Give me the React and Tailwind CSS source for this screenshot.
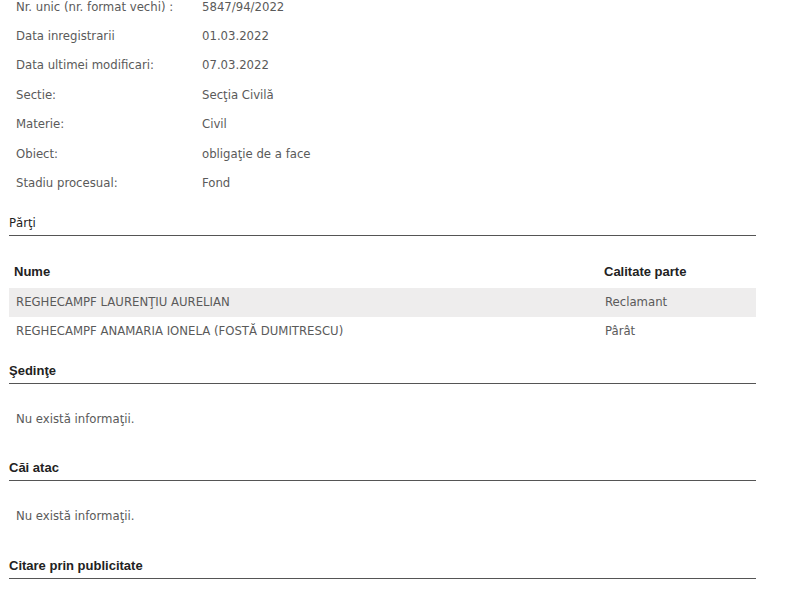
import React from 'react';

const details = [
  ['Nr. unic (nr. format vechi) :', '5847/94/2022'],
  ['Data inregistrarii', '01.03.2022'],
  ['Data ultimei modificari:', '07.03.2022'],
  ['Sectie:', 'Secţia Civilă'],
  ['Materie:', 'Civil'],
  ['Obiect:', 'obligaţie de a face'],
  ['Stadiu procesual:', 'Fond'],
];

const parti = [
  ['REGHECAMPF LAURENŢIU AURELIAN', 'Reclamant'],
  ['REGHECAMPF ANAMARIA IONELA (FOSTĂ DUMITRESCU)', 'Pârât'],
];

const body = "font-['DejaVu_Sans_Condensed','DejaVu_Sans',sans-serif] text-[13px] leading-[18px] text-[#5a5a5a]";
const bold = "font-['Liberation_Sans',Arial,sans-serif] font-bold text-[13px] text-[#222]";

function SectionTitle({ children, className = bold }) {
  return (
    <div className="border-b border-[#555] pb-[3px]">
      <h3 className={`${className} leading-[18px]`}>{children}</h3>
    </div>
  );
}

export default function App() {
  return (
    <div className="w-[800px] h-[600px] overflow-hidden bg-white pl-[9px] pr-[44px]">
      {/* Detalii dosar */}
      <div className={`${body} -mt-[8px] pl-[7px]`}>
        {details.map(([label, value]) => (
          <div key={label} className="flex h-[29.4px] items-center">
            <span className="w-[186px]">{label}</span>
            <span>{value}</span>
          </div>
        ))}
      </div>

      {/* Parti */}
      <div className="mt-[16px]">
        <SectionTitle className={`${body} text-[#222]`}>Părţi</SectionTitle>
        <div className="mt-[25px]">
          <div className={`${bold} flex h-[27px] items-center pb-[5px] pl-[5px]`}>
            <span className="flex-1">Nume</span>
            <span className="w-[152px]">Calitate parte</span>
          </div>
          {parti.map(([name, role], i) => (
            <div
              key={name}
              className={`${body} flex h-[29px] items-center pl-[7px] ${i === 0 ? 'bg-[#eeeded]' : ''}`}
            >
              <span className="flex-1">{name}</span>
              <span className="w-[151px]">{role}</span>
            </div>
          ))}
        </div>
      </div>

      {/* Sedinte */}
      <div className="mt-[16px]">
        <SectionTitle>Şedinţe</SectionTitle>
        <p className={`${body} mt-[26px] pl-[7px]`}>Nu există informaţii.</p>
      </div>

      {/* Cai atac */}
      <div className="mt-[31px]">
        <SectionTitle>Căi atac</SectionTitle>
        <p className={`${body} mt-[26px] pl-[7px]`}>Nu există informaţii.</p>
      </div>

      {/* Citare prin publicitate */}
      <div className="mt-[32px]">
        <SectionTitle>Citare prin publicitate</SectionTitle>
      </div>
    </div>
  );
}
